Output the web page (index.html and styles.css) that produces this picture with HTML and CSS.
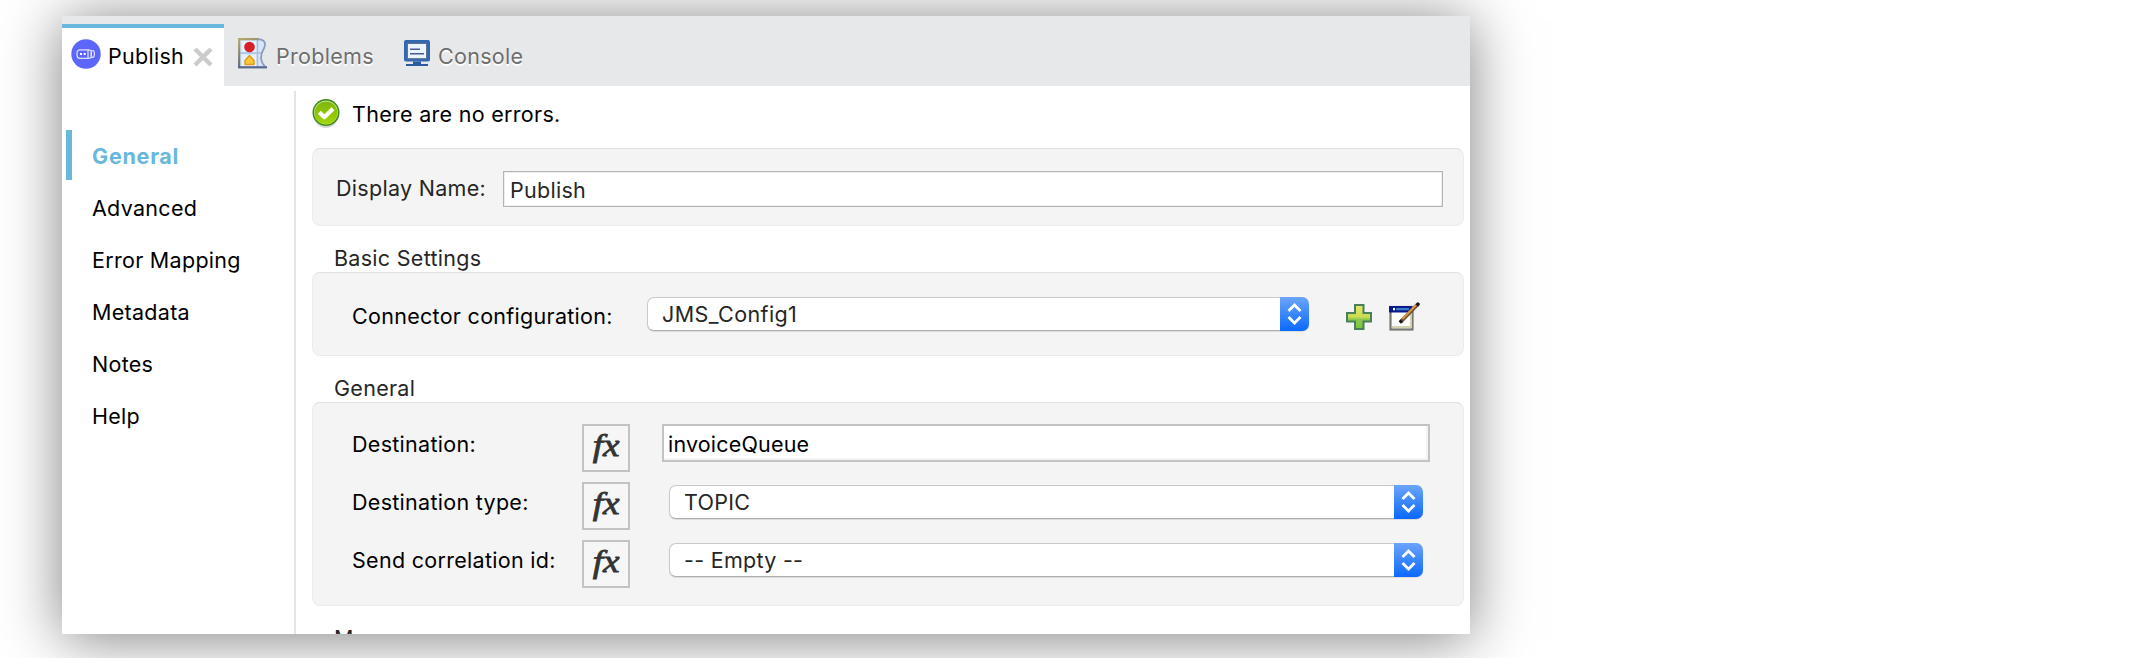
FILE: index.html
```html
<!DOCTYPE html>
<html lang="en">
<head>
<meta charset="utf-8">
<title>Publish</title>
<link rel="stylesheet" href="styles.css">
</head>
<body>
<svg class="defs" width="0" height="0">
  <defs>
    <linearGradient id="green" x1="0" y1="0" x2="0" y2="1"><stop offset="0" stop-color="#7fb80c"/><stop offset=".45" stop-color="#8cc400"/><stop offset="1" stop-color="#a4d80c"/></linearGradient>
    <linearGradient id="plus" x1="0" y1="0" x2="0" y2="1"><stop offset="0" stop-color="#e9e46c"/><stop offset=".5" stop-color="#c9dc50"/><stop offset=".6" stop-color="#8cc850"/><stop offset="1" stop-color="#7cc23c"/></linearGradient>
    <linearGradient id="edge" x1="0" y1="0" x2=".3" y2="1"><stop offset="0" stop-color="#b5a668"/><stop offset="1" stop-color="#536284"/></linearGradient>
    <symbol id="arrows" viewBox="0 0 29 34"><path d="M8.500 14l6-6 6 6M8.500 20l6 6 6-6" fill="none" stroke="#fff" stroke-width="2.700"/></symbol>
  </defs>
</svg>
<div class="window">
  <header class="tabs">
    <div class="tab tab-active">
      <svg class="ico-publish" width="30" height="30" viewBox="0 0 30 30"><circle cx="15" cy="15" r="14.700" fill="#5d66fa"/><g fill="none" stroke="#dfe1ff" stroke-width="1.200"><path d="M17 10.800H9q-3 0-3 3v2.500q0 3 3 3h8z"/><path d="M17 10.800l3.200.6v7.300l-3.200.6"/><ellipse cx="21.800" cy="15" rx="1.600" ry="3.500"/></g><g fill="#fff"><rect x="9" y="14" width="2" height="2"/><rect x="12.700" y="14" width="2" height="2"/></g></svg>
      <span class="tab-name tab-name-active">Publish</span>
      <svg class="ico-close" width="20" height="20" viewBox="0 0 20 20"><path d="M2 2l16 16M18 2L2 18" stroke="#cbcbcb" stroke-width="4.400"/></svg>
    </div>
    <div class="tab tab-problems">
      <svg width="30" height="31" viewBox="0 0 30 31"><path d="M1 1h21q5 1 5 5 0 3-2 6t-2 8q1 6 5 9H1z" fill="#d6e7f7"/><path d="M1 15h23M19.500 2v27" stroke="#a9c0e2" stroke-width="1.500"/><path d="M4 3h14v11H4zM4 17h14v11H4z" fill="#e6f2fb"/><path d="M1.200 30V1.200H21" fill="none" stroke="url(#edge)" stroke-width="2.200"/><path d="M20 1.200q7 .5 7 5 0 3-2 6t-2 8q1 6 4 8" fill="none" stroke="#8c9cbd" stroke-width="1.800"/><path d="M0 29.300h29" stroke="#56678c" stroke-width="2.200"/><circle cx="11.500" cy="9" r="5.300" fill="#d81e28"/><path d="M7 26.500v-4l4.500-5 4.500 5v4z" fill="#fbc93a" stroke="#e49a1c" stroke-width="1.500" stroke-linejoin="round"/></svg>
      <span class="tab-name tab-name-problems">Problems</span>
    </div>
    <div class="tab tab-console">
      <svg width="26" height="27" viewBox="0 0 26 27"><rect x="0" y="0" width="26" height="21.500" rx="2" fill="#2f67b2"/><rect x="3.300" y="3.300" width="19.400" height="15.500" fill="#eaf4fd" stroke="#5c6d90" stroke-width="1.300"/><path d="M6 9.200h10M6 13.700h14" stroke="#4a5d98" stroke-width="1.600"/><path d="M9 21.500h8v2.500h7v2H2v-2h7z" fill="#2b5a9e"/></svg>
      <span class="tab-name tab-name-console">Console</span>
    </div>
  </header>
  <div class="body">
    <nav class="side">
      <a class="side-item side-on">General</a>
      <a class="side-item">Advanced</a>
      <a class="side-item">Error Mapping</a>
      <a class="side-item">Metadata</a>
      <a class="side-item">Notes</a>
      <a class="side-item">Help</a>
    </nav>
    <main class="main">
      <div class="status">
        <svg width="28" height="31" viewBox="0 0 28 31"><ellipse cx="14" cy="17" rx="12.500" ry="13" fill="#000" opacity=".16"/><circle cx="14" cy="14.500" r="13.500" fill="#3f8a1c"/><circle cx="14" cy="14.500" r="12" fill="#b9de7c"/><circle cx="14" cy="15" r="11.300" fill="url(#green)"/><path d="M7.300 14.300l5 5 8.700-8.500" fill="none" stroke="#fff" stroke-width="4.200" stroke-linejoin="round"/></svg>
        <span>There are no errors.</span>
      </div>
      <section class="panel panel-name">
        <label class="muted">Display Name:</label>
        <div class="input input-thin">Publish</div>
      </section>
      <h2 class="heading">Basic Settings</h2>
      <section class="panel panel-config">
        <label class="config-label">Connector configuration:</label>
        <div class="select select-config"><span class="value value-config">JMS_Config1</span><span class="stepper"><svg width="29" height="34"><use href="#arrows"/></svg></span></div>
        <svg class="ico-plus" width="26" height="26" viewBox="0 0 26 26"><path d="M9 1h8.500v8H25v8.500h-7.500V25H9v-7.500H1V9h8z" fill="url(#plus)" stroke="#47805a" stroke-width="2"/></svg>
        <svg class="ico-edit" width="31" height="29" viewBox="0 0 31 29"><rect x="1.500" y="5" width="22" height="22.500" fill="#fff" stroke="#77776f" stroke-width="2.200"/><path d="M3 25h19V10" fill="none" stroke="#d3d2b0" stroke-width="2"/><rect x="0" y="4" width="23" height="6.500" fill="#0a1a8c"/><rect x="7" y="6" width="13" height="2.300" fill="#3b7cc8"/><rect x="4" y="6" width="2" height="2.300" fill="#fff"/><path d="M11.500 20L29 2" stroke="#6b4e3a" stroke-width="3.800"/><path d="M13.500 17L27 3" stroke="#d69a45" stroke-width="2"/><path d="M10.800 20.700l2-2M28 3.500l2-2.500" stroke="#1d1714" stroke-width="3.200"/></svg>
      </section>
      <h2 class="heading">General</h2>
      <section class="panel panel-general">
        <div class="row">
          <label class="row-label">Destination:</label><button class="fx"><span class="fx-mark">fx</span></button>
          <div class="input input-thick">invoiceQueue</div>
        </div>
        <div class="row">
          <label class="row-label">Destination type:</label><button class="fx"><span class="fx-mark">fx</span></button>
          <div class="select"><span class="value">TOPIC</span><span class="stepper"><svg width="29" height="34"><use href="#arrows"/></svg></span></div>
        </div>
        <div class="row">
          <label class="row-label">Send correlation id:</label><button class="fx"><span class="fx-mark">fx</span></button>
          <div class="select"><span class="value">-- Empty --</span><span class="stepper"><svg width="29" height="34"><use href="#arrows"/></svg></span></div>
        </div>
      </section>
      <h2 class="heading heading-cut">Message</h2>
    </main>
  </div>
</div>
</body>
</html>
```
FILE: styles.css
```css
* { box-sizing: border-box; }
body {
  margin: 0;
  width: 2142px;
  height: 658px;
  overflow: hidden;
  padding: 16px 0 0 62px;
  background: #fff;
  color: #000;
  font: 21.5px/26px Inter, "Liberation Sans", sans-serif;
  letter-spacing: .29px;
}
svg { display: block; flex: none; }
.defs { position: absolute; }
.window {
  width: 1408px;
  height: 618px;
  overflow: hidden;
  background: #fff;
  box-shadow: 0 4px 56px rgba(0, 0, 0, .5);
}

/* Tabs */
.tabs { display: flex; height: 70px; background: #e7e8ea; }
.tab { display: flex; align-items: flex-start; white-space: nowrap; }
.tab-active {
  width: 162px;
  height: 62px;
  margin-top: 8px;
  padding: 11px 0 0 9px;
  border-top: 4px solid #68b8de;
  background: #fff;
}
.tab-name { margin-top: 27px; color: #6e6e6e; text-shadow: 0 2px 0 #fff; }
.tab-name-active { width: 85px; margin: 4px 0 0 7px; color: #000; text-shadow: none; }
.ico-close { margin-top: 8px; }
.tab-problems { width: 180px; padding-left: 14px; }
.tab-problems svg { margin-top: 22px; }
.tab-name-problems { margin-left: 8px; }
.tab-console svg { margin-top: 24px; }
.tab-name-console { margin-left: 8px; }

/* Body */
.body { display: flex; height: 548px; }
.side {
  width: 234px;
  margin-top: 5px;
  padding: 39px 0 0 4px;
  border-right: 2px solid #e5e5e7;
}
.side-item {
  display: block;
  height: 50px;
  margin-bottom: 2px;
  padding-left: 26px;
  line-height: 52px;
}
.side-on {
  padding-left: 20px;
  border-left: 6px solid #68b8de;
  color: #68b8de;
  font-weight: 700;
  letter-spacing: .75px;
}
.main { width: 1168px; padding: 12px 0 0 16px; }
.status { display: flex; gap: 12px; height: 50px; }
.status span { padding-top: 3px; }

.panel {
  width: 1152px;
  border: 1px solid #ececec;
  border-top-color: #e0e0e0;
  border-radius: 8px;
  background: #f4f4f4;
}
.panel-name { display: flex; height: 78px; padding: 22px 20px 0 23px; }
.muted { width: 167px; padding-top: 4px; color: #262626; }
.input { background: #fff; white-space: nowrap; }
.input-thin {
  width: 940px;
  height: 36px;
  padding: 5px 0 0 6px;
  border: 1px solid #b4b4b4;
  box-shadow: inset 0 0 0 1px #efefef;
  color: #262626;
}
.heading {
  height: 46px;
  margin: 0;
  padding: 19px 0 0 22px;
  color: #262626;
  font-size: 21.5px;
  font-weight: 400;
}
.panel-config { display: flex; height: 84px; padding-left: 39px; }
.config-label { width: 295px; padding-top: 30px; }
.select {
  display: flex;
  justify-content: space-between;
  width: 754px;
  height: 34px;
  border: 1px solid #cacaca;
  border-bottom-color: #aeaeae;
  border-right: 0;
  border-radius: 7px;
  background: #fff;
  box-shadow: 0 1px 1px rgba(0, 0, 0, .1);
  color: #262626;
}
.value { padding: 3px 0 0 14px; white-space: nowrap; }
.value-config { letter-spacing: .4px; }
.stepper {
  width: 29px;
  height: 34px;
  margin-top: -1px;
  border-radius: 0 7px 7px 0;
  background: linear-gradient(#6ba5fb, #0a69fe);
}
.select-config { width: 662px; margin-top: 24px; }
.ico-plus { margin: 31px 0 0 37px; }
.ico-edit { margin: 29px 0 0 17px; }

.panel-general { height: 204px; padding: 21px 0 0 39px; }
.row { display: flex; height: 58px; }
.row-label { width: 230px; padding-top: 7px; }
.fx {
  width: 48px;
  height: 48px;
  margin: 0;
  padding: 0 0 4px;
  border: 2px solid #c3c3c3;
  background: #f6f6f6;
  color: #333;
  font: italic 400 31px/36px "Liberation Serif", serif;
}
.fx-mark {
  display: inline-block;
  transform: scaleX(1.2);
  -webkit-text-stroke: .8px #333;
}
.input-thick {
  width: 768px;
  height: 38px;
  margin-left: 32px;
  padding: 5px 0 0 4px;
  border: 2px solid #c3c3c3;
  box-shadow: inset -2px -2px 0 #f4f4f4;
  letter-spacing: .18px;
}
.row .select { margin: 3px 0 0 39px; }
.heading-cut { height: 28px; overflow: hidden; }
```
